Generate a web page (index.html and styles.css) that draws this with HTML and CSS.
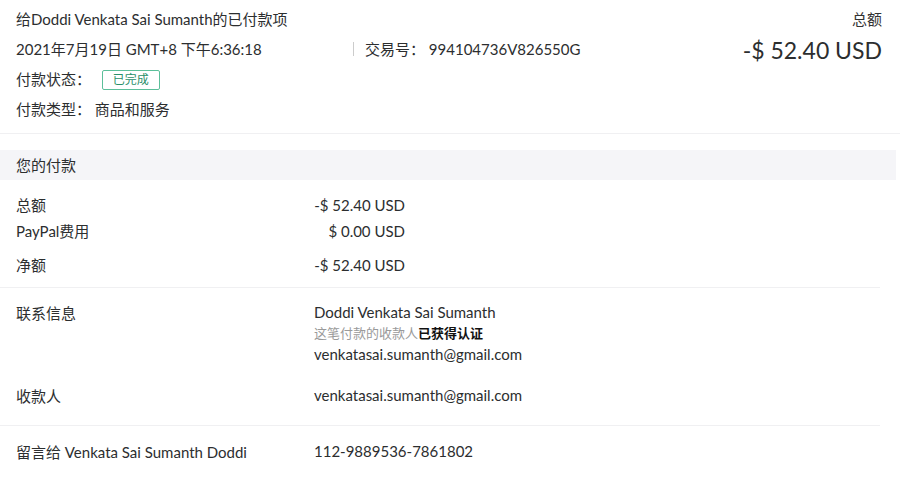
FILE: index.html
```html
<!DOCTYPE html>
<html>
<head>
    <meta charset="UTF-8">
    <title>Payment Details</title>
    <link rel="stylesheet" href="styles.css">
</head>
<body>
    <div class="header">
        <div class="header-left">
            <div class="title">给Doddi Venkata Sai Sumanth的已付款项</div>
            <div class="meta">
                <span class="date">2021年7月19日 GMT+8 下午6:36:18</span>
                <span class="txn"><span class="bar"></span>交易号： 994104736V826550G</span>
            </div>
            <div class="line">付款状态： <span class="badge">已完成</span></div>
            <div class="line">付款类型： 商品和服务</div>
        </div>
        <div class="header-right">
            <div class="total-label">总额</div>
            <div class="total">-$ 52.40 USD</div>
        </div>
    </div>

    <div class="section-title">您的付款</div>

    <div class="amounts">
        <div class="amount-row"><span class="label">总额</span><span class="value">-$ 52.40 USD</span></div>
        <div class="amount-row"><span class="label">PayPal费用</span><span class="value">$ 0.00 USD</span></div>
        <div class="amount-row net"><span class="label">净额</span><span class="value">-$ 52.40 USD</span></div>
    </div>

    <div class="info-row contact">
        <div class="label">联系信息</div>
        <div class="info">
            <div>Doddi Venkata Sai Sumanth</div>
            <div class="verified">这笔付款的收款人<b>已获得认证</b></div>
            <div>venkatasai.sumanth@gmail.com</div>
        </div>
    </div>

    <div class="info-row payee">
        <div class="label">收款人</div>
        <div class="info">venkatasai.sumanth@gmail.com</div>
    </div>

    <div class="info-row note">
        <div class="label">留言给 Venkata Sai Sumanth Doddi</div>
        <div class="info">112-9889536-7861802</div>
    </div>
</body>
</html>
```

FILE: styles.css
```css
body {
    margin: 0;
    font-family: Lato, "Noto Sans CJK SC", sans-serif;
    font-size: 15px;
    color: #2c2e2f;
    background: #fff;
}
.header {
    display: flex;
    justify-content: space-between;
    padding: 8px 18px 0 16px;
    height: 125px;
    border-bottom: 1px solid #f0f0f2;
}
.title {
    height: 22px;
    line-height: 22px;
}
.meta {
    display: flex;
    margin-top: 8px;
    height: 22px;
    line-height: 22px;
}
.date {
    width: 337px;
}
.txn {
    display: flex;
    align-items: center;
}
.bar {
    display: inline-block;
    width: 1px;
    height: 14px;
    background: #ccc;
    margin-right: 11px;
}
.line {
    margin-top: 8px;
    height: 22px;
    line-height: 22px;
}
.badge {
    display: inline-block;
    margin-left: 7px;
    padding: 0 10px;
    height: 18px;
    line-height: 18px;
    font-size: 12px;
    color: #2a8f6a;
    border: 1px solid #5cbf9a;
    border-radius: 2px;
    vertical-align: 1px;
}
.header-right {
    text-align: right;
}
.total-label {
    height: 22px;
    line-height: 22px;
    color: #333;
}
.total {
    margin-top: 5px;
    font-size: 23px;
    line-height: 30px;
    color: #2c2e2f;
}
.section-title {
    margin: 16px 4px 0 0;
    height: 30px;
    line-height: 30px;
    padding-left: 16px;
    background: #f5f5f8;
}
.amounts {
    padding: 12px 0 9px 16px;
    border-bottom: 1px solid #f0f0f2;
    margin-right: 20px;
}
.amount-row {
    display: flex;
    height: 26px;
    line-height: 26px;
}
.amount-row.net {
    margin-top: 8px;
}
.amount-row .label {
    width: 180px;
}
.amount-row .value {
    width: 209px;
    text-align: right;
}
.info-row {
    display: flex;
    padding-left: 16px;
    margin-right: 20px;
}
.info-row .label {
    width: 298px;
}
.info-row .info {
    line-height: 21px;
}
.contact {
    padding-top: 14px;
    height: 59px;
}
.verified {
    color: #9a9a9a;
    font-size: 13px;
}
.verified b {
    color: #111;
}
.payee {
    padding-top: 24px;
    height: 40px;
    border-bottom: 1px solid #f0f0f2;
}
.note {
    padding-top: 15px;
}
```
